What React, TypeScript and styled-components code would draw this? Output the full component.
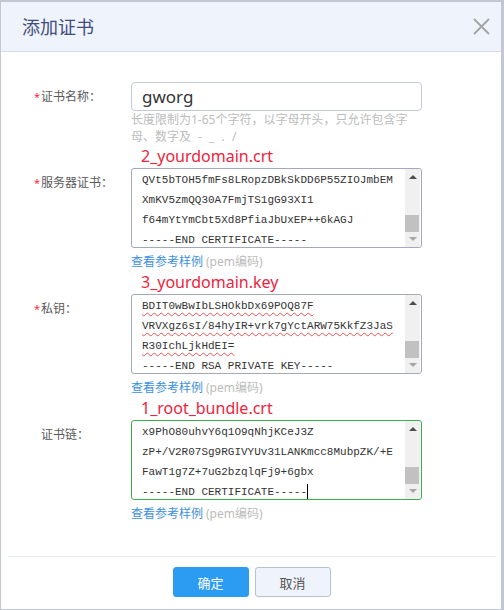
import React from "react";
import styled, { createGlobalStyle } from "styled-components";

const GlobalStyle = createGlobalStyle`
  html, body {
    margin: 0;
    padding: 0;
    background: #c3c7d3;
  }
  body {
    font-family: "Noto Sans", "Noto Sans CJK SC", sans-serif;
  }
`;

const Dialog = styled.div`
  width: 500px;
  margin: 2px 3px 3px 1px;
  background: #fff;
  display: flex;
  flex-direction: column;
`;

const Header = styled.div`
  height: 49px;
  display: flex;
  align-items: center;
  justify-content: space-between;
  padding: 0 11px 0 21px;
  background: #eef3fc;
  border-bottom: 1px solid #d6dbe6;
`;

const Title = styled.div`
  font-size: 18px;
  color: #3f4c7c;
  line-height: 24px;
`;

const Close = styled.button`
  width: 17px;
  height: 17px;
  padding: 0;
  border: 0;
  background: transparent;
  display: flex;
`;

const Body = styled.div`
  padding: 30px 0 33px 33px;
`;

const Row = styled.div`
  display: grid;
  grid-template-columns: 97px 291px;
  align-items: start;
`;

const Label = styled.div`
  font-size: 12px;
  line-height: 30px;
  color: #5a5a5a;
  white-space: nowrap;
`;

const Star = styled.span<{ $hidden?: boolean }>`
  display: inline-block;
  width: 7px;
  font-size: 11px;
  color: #f0304a;
  visibility: ${p => (p.$hidden ? "hidden" : "visible")};
`;

const Control = styled.div`
  display: flex;
  flex-direction: column;
`;

const Input = styled.div`
  height: 29px;
  box-sizing: border-box;
  border: 1px solid #c4cad6;
  border-radius: 4px;
  padding: 0 10px;
  font-size: 17px;
  line-height: 27px;
  color: #333;
`;

const Hint = styled.div`
  max-width: 284px;
  font-size: 12px;
  line-height: 17px;
  word-spacing: 4px;
  color: #bcbcbc;
`;

const Note = styled.div`
  margin: 1px 0 2px 107px;
  font-size: 16px;
  line-height: 20px;
  color: #f0233d;
`;

const CodeBox = styled.div<{ $focus?: boolean }>`
  height: 80px;
  box-sizing: border-box;
  display: flex;
  border: 1px solid ${p => (p.$focus ? "#3cae4b" : "#a3a9b6")};
  border-radius: 3px;
  overflow: hidden;
`;

const Lines = styled.div`
  flex: 1;
  padding: 1px 10px;
  font-family: "Liberation Mono", "DejaVu Sans Mono", monospace;
  font-size: 11px;
  line-height: 20px;
  color: #333;
  white-space: pre;
  overflow: hidden;
`;

const Typo = styled.span`
  text-decoration: underline wavy #ef5350;
  text-decoration-thickness: 1px;
  text-underline-offset: 3px;
`;

const Caret = styled.span`
  display: inline-block;
  width: 1px;
  height: 16px;
  background: #000;
  vertical-align: middle;
`;

const Scroll = styled.div`
  width: 15px;
  margin-right: 1px;
  background: #f0f0f0;
  display: flex;
  flex-direction: column;
  align-items: center;
`;

const Arrow = styled.div<{ $down?: boolean }>`
  height: 17px;
  width: 15px;
  display: flex;
  align-items: center;
  justify-content: center;

  &::after {
    content: "";
    border-left: 4px solid transparent;
    border-right: 4px solid transparent;
    ${p =>
      p.$down
        ? "border-top: 4px solid #a6a6a6;"
        : "border-bottom: 4px solid #4d4d4d;"}
  }
`;

const Track = styled.div`
  flex: 1;
  width: 100%;
`;

const Thumb = styled.div`
  margin-top: 30px;
  height: 17px;
  width: 14px;
  background: #c1c1c1;
`;

const Help = styled.div`
  margin-top: 5px;
  font-size: 12px;
  line-height: 18px;
  color: #bcbcbc;
`;

const HelpLink = styled.a`
  color: #3c8fe0;
  text-decoration: none;
  margin-right: 3px;
`;

const Footer = styled.div`
  margin: 0 6px 0 7px;
  padding: 10px 0 12px;
  border-top: 1px solid #e6e9ef;
  display: flex;
  justify-content: center;
  gap: 6px;
`;

const Button = styled.button<{ $primary?: boolean }>`
  width: 76px;
  height: 30px;
  box-sizing: border-box;
  border-radius: 3px;
  font-family: "Noto Sans", "Noto Sans CJK SC", sans-serif;
  font-size: 13px;
  border: 1px solid ${p => (p.$primary ? "#2b9cf2" : "#b9c0d0")};
  background: ${p => (p.$primary ? "#2b9cf2" : "#eff3fb")};
  color: ${p => (p.$primary ? "#fff" : "#555")};
`;

const CodeField = ({
  lines,
  focus,
}: {
  lines: React.ReactNode[];
  focus?: boolean;
}) => (
  <>
    <CodeBox $focus={focus}>
      <Lines>
        {lines.map((l, i) => (
          <div key={i}>{l}</div>
        ))}
      </Lines>
      <Scroll>
        <Arrow />
        <Track>
          <Thumb />
        </Track>
        <Arrow $down />
      </Scroll>
    </CodeBox>
    <Help>
      <HelpLink>查看参考样例</HelpLink>(pem编码)
    </Help>
  </>
);

export default function App() {
  return (
    <>
      <GlobalStyle />
      <Dialog>
        <Header>
          <Title>添加证书</Title>
          <Close>
            <svg width="17" height="17" viewBox="0 0 17 17">
              <path
                d="M1 1 L16 16 M16 1 L1 16"
                stroke="#a3a3a3"
                strokeWidth="1.8"
                fill="none"
              />
            </svg>
          </Close>
        </Header>
        <Body>
          <Row>
            <Label>
              <Star>*</Star>证书名称：
            </Label>
            <Control>
              <Input>gworg</Input>
              <Hint>长度限制为1-65个字符，以字母开头，只允许包含字母、数字及 - _ . /</Hint>
            </Control>
          </Row>
          <Note>2_yourdomain.crt</Note>
          <Row>
            <Label>
              <Star>*</Star>服务器证书：
            </Label>
            <Control>
              <CodeField
                lines={[
                  "QVt5bTOH5fmFs8LRopzDBkSkDD6P55ZIOJmbEM",
                  "XmKV5zmQQ30A7FmjTS1gG93XI1",
                  "f64mYtYmCbt5Xd8PfiaJbUxEP++6kAGJ",
                  "-----END CERTIFICATE-----",
                ]}
              />
            </Control>
          </Row>
          <Note>3_yourdomain.key</Note>
          <Row>
            <Label>
              <Star>*</Star>私钥：
            </Label>
            <Control>
              <CodeField
                lines={[
                  <Typo>BDIT0wBwIbLSHOkbDx69POQ87F</Typo>,
                  <Typo>VRVXgz6sI/84hyIR+vrk7gYctARW75KkfZ3JaS</Typo>,
                  <Typo>R30IchLjkHdEI=</Typo>,
                  <>
                    -----END <Typo>RSA</Typo> PRIVATE KEY-----
                  </>,
                ]}
              />
            </Control>
          </Row>
          <Note>1_root_bundle.crt</Note>
          <Row>
            <Label>
              <Star $hidden>*</Star>证书链：
            </Label>
            <Control>
              <CodeField
                focus
                lines={[
                  "x9PhO80uhvY6q1O9qNhjKCeJ3Z",
                  "zP+/V2R07Sg9RGIVYUv31LANKmcc8MubpZK/+E",
                  "FawT1g7Z+7uG2bzqlqFj9+6gbx",
                  <>
                    -----END CERTIFICATE-----
                    <Caret />
                  </>,
                ]}
              />
            </Control>
          </Row>
        </Body>
        <Footer>
          <Button $primary>确定</Button>
          <Button>取消</Button>
        </Footer>
      </Dialog>
    </>
  );
}
